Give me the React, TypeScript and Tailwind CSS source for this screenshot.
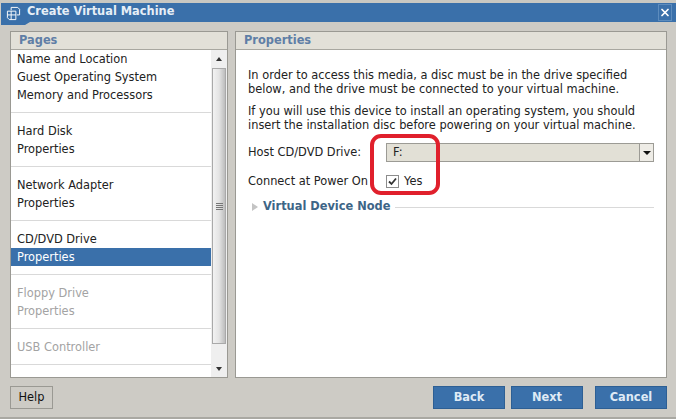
import { X } from "lucide-react";

const groups = [
  { items: ["Name and Location", "Guest Operating System", "Memory and Processors"] },
  { items: ["Hard Disk", "Properties"] },
  { items: ["Network Adapter", "Properties"] },
  { items: ["CD/DVD Drive", "Properties"], selected: 1 },
  { items: ["Floppy Drive", "Properties"], disabled: true },
  { items: ["USB Controller"], disabled: true },
];

function AppIcon() {
  return (
    <svg width="15" height="15" viewBox="0 0 16 16" fill="none" stroke="#fff" strokeWidth="1" className="shrink-0 mt-[3px]">
      <path d="M5.5 1.5h7l2 2v6h-3M5.5 1.5v3M1.5 5.5h9v9h-7l-2-2z" />
      <path d="M1.5 9.5h9M5.5 5.5v9" />
    </svg>
  );
}

function Sidebar() {
  return (
    <div className="w-[218px] h-[347px] flex flex-col border border-[#9a9993] bg-white">
      <div className="h-[18px] shrink-0 bg-[#e2e0d8] border-b border-[#a8a7a0] pl-[8px] text-[11.4px] leading-[17px] font-bold text-[#5f7ea6]">
        Pages
      </div>
      <div className="flex-1 flex min-h-0">
        <div className="flex-1 flex flex-col">
          {groups.map((g, i) => (
            <div key={i} className="border-b border-[#d9d9d9] pb-[8px] mb-[9px] last:mb-0">
              {g.items.map((t, j) => (
                <div
                  key={j}
                  className={
                    "h-[18px] pl-[6px] leading-[18px] " +
                    (g.selected === j
                      ? "bg-[#3a70aa] text-white"
                      : g.disabled
                        ? "text-[#a3a3a3]"
                        : "text-[#222]")
                  }
                >
                  {t}
                </div>
              ))}
            </div>
          ))}
        </div>
        <div className="w-[16px] shrink-0 flex flex-col bg-[#efefef] px-[1px]">
          <div className="h-[18px] flex items-center justify-center">
            <div className="w-0 h-0 border-x-[3px] border-x-transparent border-b-[4px] border-b-[#333]" />
          </div>
          <div className="h-[276px] flex flex-col items-center justify-center gap-[1px] border border-[#a9a9a9] bg-gradient-to-r from-[#f2f2f2] via-[#e4e4e4] to-[#bdbdbd]">
            <div className="w-[7px] h-[1px] bg-[#777]" />
            <div className="w-[7px] h-[1px] bg-[#777]" />
            <div className="w-[7px] h-[1px] bg-[#777]" />
            <div className="w-[7px] h-[1px] bg-[#777]" />
          </div>
          <div className="flex-1 flex items-end justify-center pb-[6px]">
            <div className="w-0 h-0 border-x-[3px] border-x-transparent border-t-[4px] border-t-[#333]" />
          </div>
        </div>
      </div>
    </div>
  );
}

function PropertiesPanel() {
  return (
    <div className="w-[432px] h-[347px] flex flex-col border border-[#9a9993] bg-white">
      <div className="h-[18px] shrink-0 bg-[#e2e0d8] border-b border-[#a8a7a0] pl-[8px] text-[11.4px] leading-[17px] font-bold text-[#5f7ea6]">
        Properties
      </div>
      <div className="relative flex-1 pl-[12px] pr-[12px] pt-[18px] text-[#222]">
        <p className="leading-[14px] whitespace-nowrap">
          In order to access this media, a disc must be in the drive specified
          <br />
          below, and the drive must be connected to your virtual machine.
        </p>
        <p className="mt-[8px] leading-[14px] whitespace-nowrap">
          If you will use this device to install an operating system, you should
          <br />
          insert the installation disc before powering on your virtual machine.
        </p>
        <div className="mt-[11px] flex items-center h-[19px]">
          <div className="w-[138px] shrink-0 pt-[1px]">Host CD/DVD Drive:</div>
          <div className="flex-1 h-[19px] flex items-center border border-[#9c9b95] bg-[#e2e0d6]">
            <div className="flex-1 pl-[6px]">F:</div>
            <div className="w-[14px] h-full flex items-center justify-center border-l border-[#9c9b95] bg-[#eeece6]">
              <div className="w-0 h-0 border-x-[4px] border-x-transparent border-t-[4px] border-t-[#111]" />
            </div>
          </div>
        </div>
        <div className="mt-[10px] flex items-center h-[19px]">
          <div className="w-[138px] shrink-0 pt-[1px]">Connect at Power On</div>
          <div className="w-[13px] h-[13px] flex items-center justify-center border border-[#8c8c8c] bg-white">
            <svg width="9" height="9" viewBox="0 0 9 9" fill="none" stroke="#333" strokeWidth="1.8">
              <path d="M1 4.5l2.5 2.5L8 1.5" />
            </svg>
          </div>
          <div className="ml-[5px] pt-[1px]">Yes</div>
        </div>
        <div className="mt-[9px] flex items-center h-[14px]">
          <div className="w-0 h-0 border-y-[4px] border-y-transparent border-l-[6px] border-l-[#c4c4c4] ml-[4px]" />
          <div className="ml-[5px] font-bold text-[#3d6587]">Virtual Device Node</div>
          <div className="flex-1 h-[1px] ml-[5px] bg-[#d9d9d9]" />
        </div>
        {/* hand drawn marker from the screenshot */}
        <div className="absolute left-[134px] top-[84px] w-[70px] h-[61px] rounded-[11px] border-[4px] border-[#e0202c]" />
      </div>
    </div>
  );
}

export default function App() {
  const blueBtn =
    "w-[72px] h-[23px] bg-[#3a70aa] border border-[#2d5f94] text-center font-bold text-[#dfeaf5] leading-[21px]";
  return (
    <div
      className="w-[676px] h-[419px] overflow-hidden flex flex-col bg-[#cdcbc5] text-[11.4px] border-b-2 border-[#a9a8a2]"
      style={{ fontFamily: '"DejaVu Sans", Verdana, sans-serif' }}
    >
      <div className="h-[3px] shrink-0 bg-[#c9c8c2]" />
      <div className="h-[22px] shrink-0 ml-[1px] flex items-start bg-[#3a70aa] pl-[5px] pr-[4px] [clip-path:polygon(0_0,100%_0,100%_19px,29px_19px,24px_100%,0_100%)]">
        <AppIcon />
        <div className="ml-[6px] font-bold text-[#e6eef6] leading-[16px]">Create Virtual Machine</div>
        <div className="ml-auto mt-[1px] w-[14px] h-[17px] flex items-center justify-center border border-[#5d8cbd]">
          <X size={13} color="#fff" strokeWidth={3.5} />
        </div>
      </div>
      <div className="flex gap-[7px] pl-[10px] mt-[6px]">
        <Sidebar />
        <PropertiesPanel />
      </div>
      <div className="flex items-center pl-[10px] mt-[8px]">
        <div className="w-[43px] h-[23px] border border-[#9a9993] text-center leading-[21px] text-[#111]">Help</div>
        <div className={blueBtn + " ml-[380px]"}>Back</div>
        <div className={blueBtn + " ml-[6px]"}>Next</div>
        <div className={blueBtn + " ml-[12px]"}>Cancel</div>
      </div>
    </div>
  );
}
